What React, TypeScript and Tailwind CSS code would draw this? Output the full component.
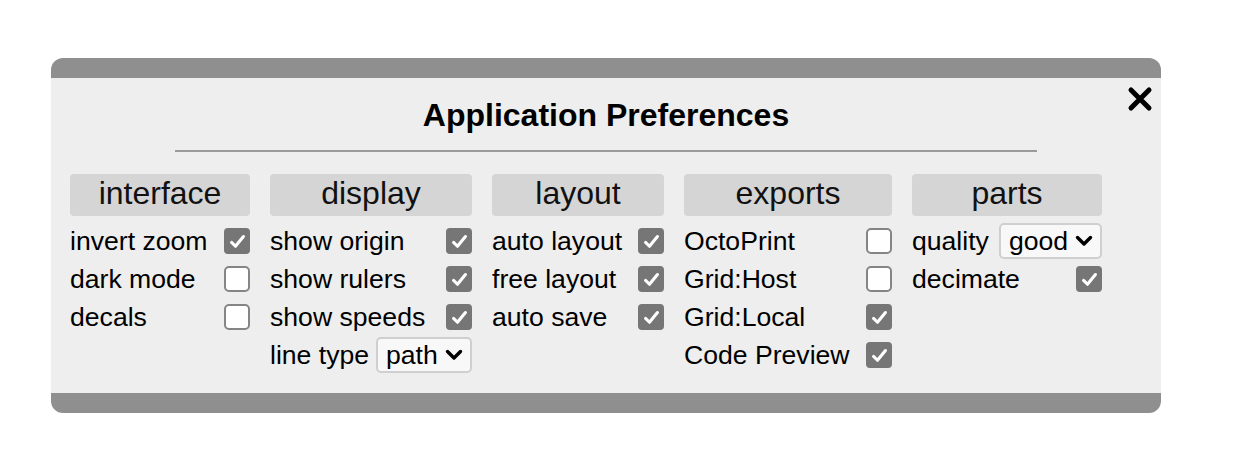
import React from 'react';

type Item =
  | { kind: 'check'; label: string; on: boolean }
  | { kind: 'select'; label: string; value: string; width: string };

type Group = { title: string; width: string; items: Item[] };

const groups: Group[] = [
  {
    title: 'interface',
    width: 'w-[180px]',
    items: [
      { kind: 'check', label: 'invert zoom', on: true },
      { kind: 'check', label: 'dark mode', on: false },
      { kind: 'check', label: 'decals', on: false },
    ],
  },
  {
    title: 'display',
    width: 'w-[202px]',
    items: [
      { kind: 'check', label: 'show origin', on: true },
      { kind: 'check', label: 'show rulers', on: true },
      { kind: 'check', label: 'show speeds', on: true },
      { kind: 'select', label: 'line type', value: 'path', width: 'w-[96px]' },
    ],
  },
  {
    title: 'layout',
    width: 'w-[172px]',
    items: [
      { kind: 'check', label: 'auto layout', on: true },
      { kind: 'check', label: 'free layout', on: true },
      { kind: 'check', label: 'auto save', on: true },
    ],
  },
  {
    title: 'exports',
    width: 'w-[208px]',
    items: [
      { kind: 'check', label: 'OctoPrint', on: false },
      { kind: 'check', label: 'Grid:Host', on: false },
      { kind: 'check', label: 'Grid:Local', on: true },
      { kind: 'check', label: 'Code Preview', on: true },
    ],
  },
  {
    title: 'parts',
    width: 'w-[190px]',
    items: [
      { kind: 'select', label: 'quality', value: 'good', width: 'w-[103px]' },
      { kind: 'check', label: 'decimate', on: true },
    ],
  },
];

function Checkbox({ on }: { on: boolean }) {
  if (on) {
    return (
      <span className="w-[26px] h-[26px] rounded-[4px] bg-[#767676] flex items-center justify-center shrink-0">
        <svg viewBox="0 0 16 16" className="w-[19px] h-[19px]">
          <path d="M3 8.8 L6.3 12 L13 3.8" fill="none" stroke="#fff" strokeWidth="2.6" strokeLinecap="round" strokeLinejoin="round" />
        </svg>
      </span>
    );
  }
  return <span className="w-[26px] h-[26px] rounded-[5px] bg-white border-2 border-[#858585] shrink-0" />;
}

function Dropdown({ value, width }: { value: string; width: string }) {
  return (
    <span className={`${width} h-[36px] rounded-[5px] border-2 border-[#cfcfcf] bg-[#f8f8f8] flex items-center justify-between pl-[8px] pr-[7px] shrink-0`}>
      <span className="pt-[1px]">{value}</span>
      <svg viewBox="0 0 18 12" className="w-[18px] h-[12px]">
        <path d="M2.5 2.5 L9 9 L15.5 2.5" fill="none" stroke="#000" strokeWidth="3.4" strokeLinecap="round" strokeLinejoin="round" />
      </svg>
    </span>
  );
}

export default function App() {
  return (
    <div className="w-[1242px] h-[452px] bg-white pt-[58px] pl-[51px] font-['Liberation_Sans',Arial,sans-serif] text-black">
      <div className="relative w-[1110px] rounded-[12px] overflow-hidden bg-[#eeeeee] border-y-[20px] border-[#8f8f8f]">
        {/* close */}
        <svg viewBox="0 0 26 26" className="absolute top-[8px] right-[8px] w-[26px] h-[26px]">
          <path d="M4 4 L22 22 M22 4 L4 22" stroke="#000" strokeWidth="5" strokeLinecap="round" />
        </svg>

        <h1 className="pt-[19px] text-center text-[32px] leading-[37px] font-bold">Application Preferences</h1>
        <div className="mx-auto mt-[16px] w-[862px] h-[2px] bg-[#9a9a9a]" />

        <div className="flex gap-[20px] pl-[19px] pt-[22px] pb-[19px]">
          {groups.map((g) => (
            <div key={g.title} className={`${g.width} flex flex-col`}>
              <div className="h-[42px] rounded-[4px] bg-[#d5d5d5] text-[32px] leading-[38px] text-center text-[#111]">
                {g.title}
              </div>
              <div className="mt-[6px] flex flex-col text-[26.6px]">
                {g.items.map((it) => (
                  <div key={it.label} className="h-[38px] flex items-center justify-between">
                    <span className="whitespace-nowrap pt-[2px]">{it.label}</span>
                    {it.kind === 'check' ? <Checkbox on={it.on} /> : <Dropdown value={it.value} width={it.width} />}
                  </div>
                ))}
              </div>
            </div>
          ))}
        </div>
      </div>
    </div>
  );
}
